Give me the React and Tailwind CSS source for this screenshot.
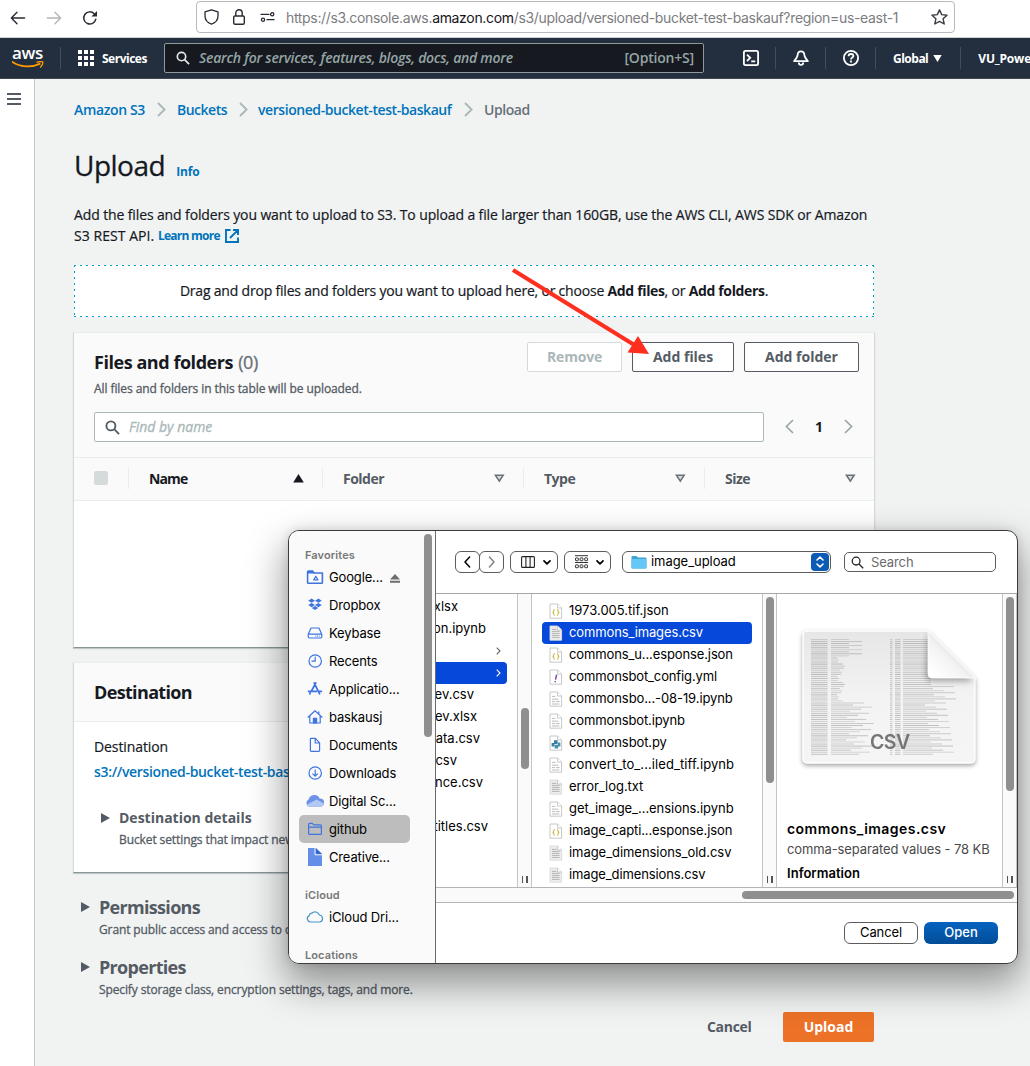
import React from "react";

function MagnifierIcon({ className, strokeWidth = 2 }) {
  return (
    <svg viewBox="0 0 16 16" fill="none" stroke="currentColor" strokeWidth={strokeWidth} className={className}>
      <circle cx="6.3" cy="6.3" r="4.8" />
      <path d="M9.8 9.8L15 15" />
    </svg>
  );
}

function BrowserBar() {
  return (
    <div className="flex h-[38px] shrink-0 items-start border-b border-[#cfcfd2] bg-white font-['Inter',sans-serif] text-[#2b2a33]">
      <div className="flex h-[35px] w-[196px] shrink-0 items-center pl-[10px]">
        <svg width="16" height="14" viewBox="0 0 16 14" fill="none" stroke="#2b2a33" strokeWidth="1.4" strokeLinecap="round" strokeLinejoin="round">
          <path d="M7 1.2L1.4 7L7 12.8M1.6 7H14.6" />
        </svg>
        <svg className="ml-[20px]" width="16" height="14" viewBox="0 0 16 14" fill="none" stroke="#b5b5b8" strokeWidth="1.4" strokeLinecap="round" strokeLinejoin="round">
          <path d="M9 1.2L14.6 7L9 12.8M14.4 7H1.4" />
        </svg>
        <svg className="ml-[20px]" width="16" height="16" viewBox="0 0 16 16" fill="none">
          <path d="M13.8 9.2A6.1 6.1 0 1 1 12.2 3.7" stroke="#2b2a33" strokeWidth="1.5" strokeLinecap="round" />
          <path d="M15 1V6.6H9.4Z" fill="#2b2a33" />
        </svg>
      </div>
      <div className="mt-px flex h-8 w-[759px] shrink-0 items-center rounded-[4px] border border-[#b9b9be] pl-[7px]">
        <svg width="15" height="16" viewBox="0 0 15 16" fill="none" stroke="#2b2a33" strokeWidth="1.3" strokeLinejoin="round">
          <path d="M7.5 0.8L14 2.9V6.8C14 10.6 11.5 13.9 7.5 15.2C3.5 13.9 1 10.6 1 6.8V2.9Z" />
        </svg>
        <svg className="ml-[14px]" width="12" height="16" viewBox="0 0 12 16" fill="none" stroke="#2b2a33" strokeWidth="1.4">
          <rect x="0.7" y="7" width="10.6" height="8.2" rx="1.2" />
          <path d="M2.8 7V4A3.2 3.2 0 0 1 9.2 4V7" />
        </svg>
        <svg className="ml-[15px]" width="16" height="10" viewBox="0 0 16 10" fill="none" stroke="#2b2a33" strokeWidth="1.3" strokeLinecap="round">
          <path d="M1 2.3H9M7 7.7H14" />
          <circle cx="12.2" cy="2.3" r="1.6" />
          <circle cx="3" cy="7.7" r="1.6" />
        </svg>
        <div className="ml-[10px] w-[640px] pt-px text-[14px] tracking-[-0.33px] whitespace-nowrap text-[#7c7c80]">
          https://s3.console.aws.<span className="text-[#15141a]">amazon.com</span>/s3/upload/versioned-bucket-test-baskauf?region=us-east-1
        </div>
        <svg className="ml-[5px] shrink-0" width="17" height="16" viewBox="0 0 17 16" fill="none" stroke="#3b3a43" strokeWidth="1.4" strokeLinejoin="round">
          <path d="M8.5 0.9L10.7 5.6L16 6.2L12.1 9.8L13.2 15L8.5 12.4L3.8 15L4.9 9.8L1 6.2L6.3 5.6Z" />
        </svg>
      </div>
    </div>
  );
}

function NavRule() {
  return <div className="h-[22px] w-px shrink-0 bg-[#414d5c]" />;
}

function AwsBar() {
  return (
    <div className="flex h-[41px] shrink-0 items-center overflow-hidden border-b border-[#414750] bg-[#232f3e] text-[12px] font-bold whitespace-nowrap text-white">
      <div className="flex w-[60px] shrink-0 flex-col pl-[12px]">
        <div className="h-[15px] text-[17px] leading-[12px] font-semibold tracking-[-0.3px]">aws</div>
        <svg width="32" height="8" viewBox="0 0 32 8" fill="none" className="-mt-px">
          <path d="M0.5 1C8 6.2 19 6.8 27.6 2.8" stroke="#f90" strokeWidth="1.9" strokeLinecap="round" />
          <path d="M25 1.2C27.5 0.4 30.6 0.4 30.8 1C31 2 30 4.6 28.6 6" stroke="#f90" strokeWidth="1.3" strokeLinecap="round" />
        </svg>
      </div>
      <NavRule />
      <svg className="ml-[17px] shrink-0" width="16" height="16" viewBox="0 0 16 16" fill="white">
        {[0, 6, 12].map((y) => [0, 6, 12].map((x) => <rect key={`${x}-${y}`} x={x} y={y} width="4" height="4" />))}
      </svg>
      <div className="ml-[8px] w-[62px] shrink-0 pt-[2px] tracking-[-0.5px]">Services</div>
      <div className="flex h-[30px] w-[540px] shrink-0 items-center rounded-[2px] border border-[#8d9a9b] bg-[#16191f] pr-[9px] pl-[11px] text-[14px] font-semibold text-[#95a5a6]">
        <MagnifierIcon className="h-[14px] w-[14px] text-[#e3e8e8]" strokeWidth={1.9} />
        <div className="ml-[9px] grow pb-px tracking-[-0.25px] italic">Search for services, features, blogs, docs, and more</div>
        <div className="pb-px tracking-[-0.2px]">[Option+S]</div>
      </div>
      <svg className="ml-[39px] shrink-0" width="16" height="16" viewBox="0 0 16 16" fill="none" stroke="white" strokeWidth="1.8">
        <rect x="0.9" y="0.9" width="14.2" height="14.2" rx="1.6" />
        <path d="M4 4.6L7.2 7.8L4 11M8.2 11.4H12.2" />
      </svg>
      <div className="ml-[16px]"><NavRule /></div>
      <svg className="ml-[17px] shrink-0" width="16" height="16" viewBox="0 0 16 16" fill="none" stroke="white" strokeWidth="1.8" strokeLinejoin="round">
        <path d="M8 1.4C5.6 1.4 4.8 3 4.6 5C4.4 7.4 3.4 8.6 1.2 11.2H14.8C12.6 8.6 11.6 7.4 11.4 5C11.2 3 10.4 1.4 8 1.4Z" />
        <path d="M5.8 12.4C5.8 13.9 6.7 14.8 8 14.8S10.2 13.9 10.2 12.4" />
      </svg>
      <div className="ml-[16px]"><NavRule /></div>
      <svg className="ml-[17px] shrink-0" width="16" height="16" viewBox="0 0 16 16" fill="none" stroke="white" strokeWidth="1.8">
        <circle cx="8" cy="8" r="7.1" />
        <path d="M5.6 6.2C5.6 4.8 6.6 4 8 4S10.4 4.8 10.4 6.1C10.4 7.6 8 7.6 8 9.5M8 10.6V12.4" />
      </svg>
      <div className="ml-[16px]"><NavRule /></div>
      <div className="ml-[17px] w-[36px] pt-[2px] tracking-[-0.5px]">Global</div>
      <svg className="ml-[5px] shrink-0" width="9" height="7" viewBox="0 0 9 7" fill="white"><path d="M0.3 0H8.7L4.5 7Z" /></svg>
      <div className="ml-[18px]"><NavRule /></div>
      <div className="ml-[17px] pt-[2px] tracking-[-0.2px]">VU_PowerUser</div>
    </div>
  );
}

function CrumbArrow() {
  return (
    <svg width="9" height="15" viewBox="0 0 9 15" fill="none" stroke="#aab7b8" strokeWidth="1.8"><path d="M1 1L7.6 7.5L1 14" /></svg>
  );
}

function Breadcrumb() {
  return (
    <div className="mt-[19px] flex h-[22px] items-center text-[14px] font-semibold whitespace-nowrap text-[#0073bb]">
      <div className="w-[83px] tracking-[-0.36px]">Amazon S3</div>
      <CrumbArrow />
      <div className="ml-[11px] w-[62px] tracking-[-0.5px]">Buckets</div>
      <CrumbArrow />
      <div className="ml-[10px] w-[206px] tracking-[-0.43px]">versioned-bucket-test-baskauf</div>
      <CrumbArrow />
      <div className="ml-[11px] font-semibold tracking-[-0.45px] text-[#687078]">Upload</div>
    </div>
  );
}

function DropZone() {
  return (
    <div className="mt-[19px] flex h-[52px] w-[800px] items-center justify-center bg-white bg-[repeating-linear-gradient(90deg,#00a1c9_0_2px,transparent_2px_6px),repeating-linear-gradient(90deg,#00a1c9_0_2px,transparent_2px_6px),repeating-linear-gradient(180deg,#00a1c9_0_2px,transparent_2px_6px),repeating-linear-gradient(180deg,#00a1c9_0_2px,transparent_2px_6px)] bg-[size:100%_1px,100%_1px,1px_100%,1px_100%] bg-[position:0_0,0_100%,0_0,100%_0] bg-no-repeat pb-[2px] text-[14px] tracking-[-0.2px] whitespace-nowrap [-webkit-text-stroke:0.2px]">
      <div>
        Drag and drop files and folders you want to upload here, or choose{" "}
        <b className="tracking-[-0.35px] [-webkit-text-stroke:0px]">Add files</b>, or <b className="tracking-[-0.35px] [-webkit-text-stroke:0px]">Add folders</b>.
      </div>
    </div>
  );
}

function SortIcon({ asc }) {
  return asc ? (
    <svg width="11" height="9" viewBox="0 0 11 9" fill="#16191f"><path d="M5.5 0L10.8 8.6H0.2Z" /></svg>
  ) : (
    <svg width="11" height="9" viewBox="0 0 11 9" fill="#d9dcdd" stroke="#687078" strokeWidth="1.5"><path d="M1.4 1.2H9.2L5.3 7.2Z" /></svg>
  );
}

const card = "w-[802px] -ml-px border border-[#d5dbdb] border-t-[#eaeded] border-b-[#879596] bg-white shadow-[0_1px_1px_rgba(0,28,36,0.2)]";

function FilesCard() {
  return (
    <div className={"mt-[15px] flex h-[316px] flex-col " + card}>
      <div className="flex h-[125px] shrink-0 flex-col border-b border-[#eaeded] bg-[#fafafa] pl-[20px]">
        <div className="flex h-[50px]">
          <div className="mt-[16px] grow text-[18px] leading-[26px] font-bold tracking-[-0.45px]">
            Files and folders <span className="ml-px font-normal text-[#687078] [-webkit-text-stroke:0.3px]">(0)</span>
          </div>
          <div className="mt-[9px] flex h-[30px] gap-[10px] text-[14px] font-bold text-[#545b64]">
            <div className="flex w-[95px] items-center justify-center rounded-[2px] border border-[#d5dbdb] bg-white pb-[2px] tracking-[-0.2px] text-[#aab7b8]">Remove</div>
            <div className="flex w-[102px] items-center justify-center rounded-[2px] border border-[#545b64] bg-white pb-[2px]">Add files</div>
            <div className="mr-[15px] flex w-[115px] items-center justify-center rounded-[2px] border border-[#545b64] bg-white pb-[2px]">Add folder</div>
          </div>
        </div>
        <div className="h-[29px] text-[12px] leading-[12px] tracking-[-0.08px] text-[#545b64] [-webkit-text-stroke:0.3px]">All files and folders in this table will be uploaded.</div>
        <div className="flex h-[30px] items-center">
          <div className="flex h-[30px] w-[670px] items-center rounded-[2px] border border-[#aab7b8] bg-white pl-[10px]">
            <MagnifierIcon className="h-[15px] w-[15px] text-[#545b64]" strokeWidth={2} />
            <div className="ml-[9px] pb-[2px] text-[14px] tracking-[0px] text-[#aab7b8] italic [-webkit-text-stroke:0.3px]">Find by name</div>
          </div>
          <svg className="mb-px ml-[21px]" width="9" height="15" viewBox="0 0 9 15" fill="none" stroke="#95a5a6" strokeWidth="1.6"><path d="M8 1L1.4 7.5L8 14" /></svg>
          <div className="w-[50px] pb-[2px] text-center text-[14px] font-bold">1</div>
          <svg className="mb-px" width="9" height="15" viewBox="0 0 9 15" fill="none" stroke="#95a5a6" strokeWidth="1.6"><path d="M1 1L7.6 7.5L1 14" /></svg>
        </div>
      </div>
      <div className="flex h-[43px] shrink-0 items-center border-b border-[#eaeded] bg-[#fafafa] pb-[2px] pl-[20px] text-[14px] font-bold text-[#545b64]">
        <div className="h-[14px] w-[14px] rounded-[2px] bg-[#d5dbdb]" />
        <div className="ml-[20px] h-[21px] w-px bg-[#eaeded]" />
        <div className="ml-[20px] w-[144px] tracking-[-0.9px] text-[#16191f]">Name</div>
        <SortIcon asc />
        <div className="ml-[18px] h-[21px] w-px bg-[#eaeded]" />
        <div className="ml-[20px] w-[151px] tracking-[-0.5px]">Folder</div>
        <SortIcon />
        <div className="ml-[18px] h-[21px] w-px bg-[#eaeded]" />
        <div className="ml-[20px] w-[131px] tracking-[-0.5px]">Type</div>
        <SortIcon />
        <div className="ml-[18px] h-[21px] w-px bg-[#eaeded]" />
        <div className="ml-[20px] w-[120px] tracking-[-0.5px]">Size</div>
        <SortIcon />
      </div>
    </div>
  );
}

function RightTriangle({ className }) {
  return (
    <svg className={className} width="9" height="10" viewBox="0 0 9 10" fill="#545b64"><path d="M0 0L9 5L0 10Z" /></svg>
  );
}

function DestinationCard() {
  return (
    <div className={"mt-[14px] h-[211px] " + card}>
      <div className="flex h-[59px] items-center border-b border-[#eaeded] bg-[#fafafa] pl-[20px] text-[18px] font-bold tracking-[-0.65px]">Destination</div>
      <div className="pl-[20px] text-[14px]">
        <div className="mt-[15px] leading-[20px] tracking-[-0.1px] [-webkit-text-stroke:0.2px]">Destination</div>
        <div className="mt-[5px] leading-[20px] font-semibold tracking-[-0.33px] text-[#0073bb]">s3://versioned-bucket-test-baskauf</div>
        <div className="mt-[26px] flex items-center leading-[20px] font-bold text-[#545b64]">
          <RightTriangle className="ml-[7px]" />
          <div className="ml-[9px]">Destination details</div>
        </div>
        <div className="ml-[25px] text-[12px] leading-[24px] tracking-[-0.1px] text-[#545b64] [-webkit-text-stroke:0.3px]">Bucket settings that impact new objects stored in the specified destination.</div>
      </div>
    </div>
  );
}

function Expander({ title, text }) {
  return (
    <div className="h-[60px] text-[#545b64]">
      <div className="flex h-[26px] items-center text-[18px] font-bold tracking-[-0.69px]">
        <RightTriangle className="ml-[7px]" />
        <div className="ml-[9px]">{title}</div>
      </div>
      <div className="ml-[25px] text-[12px] leading-[20px] tracking-[-0.12px] [-webkit-text-stroke:0.3px]">{text}</div>
    </div>
  );
}

const side = { width: 18, height: 18, viewBox: "0 0 18 18", fill: "none", stroke: "#3f74e0", strokeWidth: 1.2, strokeLinejoin: "round", strokeLinecap: "round" };

const sideIcons = {
  google: (
    <svg {...side}>
      <path d="M1.6 4V14.4A0.8 0.8 0 0 0 2.4 15.2H15.6A0.8 0.8 0 0 0 16.4 14.4V5H8L6.6 3.2H2.4A0.8 0.8 0 0 0 1.6 4Z" strokeWidth="1.6" />
      <path d="M1.6 5H8L6.6 3H1.8Z" fill="#3f74e0" />
      <path d="M9.8 8.2L12 12H7.6Z" fill="#3f74e0" />
      <circle cx="9.8" cy="10.7" r="0.8" fill="white" stroke="none" />
    </svg>
  ),
  dropbox: (
    <svg {...side} fill="#3f74e0" stroke="none">
      <path d="M5.6 2.6L9 4.7L5.6 6.8L2.2 4.7ZM12.4 2.6L15.8 4.7L12.4 6.8L9 4.7ZM5.6 7L9 9.1L5.6 11.2L2.2 9.1ZM12.4 7L15.8 9.1L12.4 11.2L9 9.1ZM9 10L12.2 12L9 14L5.8 12Z" />
    </svg>
  ),
  drive: (
    <svg {...side}>
      <path d="M5 4H13L15.8 10.4V12.6A1.4 1.4 0 0 1 14.4 14H3.6A1.4 1.4 0 0 1 2.2 12.6V10.4ZM2.4 10.2H15.6" />
      <path d="M9.5 12.1H13.6" strokeDasharray="0.8 0.9" strokeLinecap="butt" />
    </svg>
  ),
  clock: (
    <svg {...side}>
      <circle cx="9.2" cy="9" r="6.2" />
      <path d="M9.2 5V9.2H6" />
    </svg>
  ),
  apps: (
    <svg {...side} strokeWidth="1.7">
      <path d="M8.2 3L13.6 13.8M9.8 3L5.2 11.4M2.6 11.4H10.4M12.6 11.4H15.4M3.8 13.8L4.2 13" />
    </svg>
  ),
  home: (
    <svg {...side}>
      <path d="M2 9.2L9 2.8L16 9.2M3.8 8V15H14.2V8M12.8 3.8V6" />
      <path d="M7.4 15V10.4H10.6V15Z" fill="#3f74e0" />
    </svg>
  ),
  doc: (
    <svg {...side}>
      <path d="M4.4 3.2A0.8 0.8 0 0 1 5.2 2.4H9.4L13.6 6.8V14.6A0.8 0.8 0 0 1 12.8 15.4H5.2A0.8 0.8 0 0 1 4.4 14.6ZM9.2 2.6V7H13.4" />
    </svg>
  ),
  down: (
    <svg {...side}>
      <circle cx="9.2" cy="9" r="6.2" />
      <path d="M9.2 5.8V12M6.8 9.8L9.2 12.2L11.6 9.8" />
    </svg>
  ),
  cloudFill: (
    <svg {...side} stroke="none">
      <path d="M4 14.8A3.8 3.8 0 0 1 2.6 7.6A5.8 5.8 0 0 1 13.6 6.4A4.2 4.2 0 0 1 14.4 14.8Z" fill="#6e93e6" />
      <path d="M0.8 12.8L10.6 7.6L17.8 11.4A3.6 3.6 0 0 1 14.4 14.8H4A3.6 3.6 0 0 1 0.8 12.8Z" fill="#b4c8f4" />
    </svg>
  ),
  folder: (
    <svg {...side}>
      <path d="M2.6 4.4A1 1 0 0 1 3.6 3.4H6.4L7.8 4.8H14.4A1 1 0 0 1 15.4 5.8V13.4A1 1 0 0 1 14.4 14.4H3.6A1 1 0 0 1 2.6 13.4ZM2.6 7.2H15.4" />
    </svg>
  ),
  docFill: (
    <svg {...side} stroke="none">
      <path d="M2 0H9.8L16 6V18H2Z" fill="#648fe8" />
      <path d="M9.8 0V6H16Z" fill="#3565d0" />
      <path d="M9 0V6.8H16" stroke="white" strokeWidth="0.9" />
    </svg>
  ),
  cloud: (
    <svg {...side} stroke="#4795c4">
      <path d="M4.2 14A3.4 3.4 0 0 1 3.2 7.6A2.9 2.9 0 0 1 5.8 5.2A4.6 4.6 0 0 1 13.4 7A3.6 3.6 0 0 1 14 14Z" />
    </svg>
  ),
};

const favorites = [
  ["google", "Google..."],
  ["dropbox", "Dropbox"],
  ["drive", "Keybase"],
  ["clock", "Recents"],
  ["apps", "Applicatio..."],
  ["home", "baskausj"],
  ["doc", "Documents"],
  ["down", "Downloads"],
  ["cloudFill", "Digital Sc..."],
  ["folder", "github"],
  ["docFill", "Creative..."],
];

function SideItem({ icon, label, selected }) {
  return (
    <div className={"ml-[10px] flex h-[28px] w-[111px] shrink-0 items-center rounded-[5px] pl-[7px] " + (selected ? "bg-[#bdbdbd]" : "")}>
      {sideIcons[icon]}
      <div className="ml-[5px] pt-[2px] tracking-[-0.15px]">{label}</div>
      {icon === "google" && (
        <svg className="mt-[3px] ml-[7px]" width="10" height="9" viewBox="0 0 10 9" fill="#6e6e6e"><path d="M5 0L10 5.6H0ZM0 6.8H10V8.8H0Z" /></svg>
      )}
    </div>
  );
}

function SideHeading({ children, className }) {
  return <div className={"h-[16px] shrink-0 pl-[16px] text-[11px] leading-[16px] font-semibold tracking-[0.1px] text-[#777] " + className}>{children}</div>;
}

function Sidebar() {
  return (
    <div className="flex w-[147px] shrink-0 border-r border-[#6b6b6b] bg-[#fafafa]">
      <div className="flex w-[135px] shrink-0 flex-col overflow-hidden text-[13px] whitespace-nowrap text-black">
        <SideHeading className="mt-[16px]">Favorites</SideHeading>
        {favorites.map(([icon, label]) => (
          <SideItem key={label} icon={icon} label={label} selected={label === "github"} />
        ))}
        <SideHeading className="mt-[16px]">iCloud</SideHeading>
        <SideItem icon="cloud" label="iCloud Dri..." />
        <SideHeading className="mt-[16px]">Locations</SideHeading>
      </div>
      <div className="mt-[3px] h-[203px] w-[8px] rounded-full bg-[#8f8f8f]" />
    </div>
  );
}

function Chevron({ className = "" }) {
  return (
    <svg className={className} width="8" height="5" viewBox="0 0 8 5" fill="none" stroke="black" strokeWidth="1.7" strokeLinecap="round" strokeLinejoin="round"><path d="M1 0.9L4 3.9L7 0.9" /></svg>
  );
}

function Toolbar() {
  return (
    <div className="flex h-[63px] shrink-0 border-b border-[#a8a8a8] pt-[20px] pl-[19px]">
      <div className="flex h-[22px]">
        <div className="flex w-[25px] items-center justify-center rounded-[6px] border border-[#5c5c5c]">
          <svg width="7" height="12" viewBox="0 0 7 12" fill="none" stroke="black" strokeWidth="1.5" strokeLinecap="round" strokeLinejoin="round"><path d="M5.6 1L1 6L5.6 11" /></svg>
        </div>
        <div className="-ml-px flex w-[25px] items-center justify-center rounded-[6px] border border-[#5c5c5c]">
          <svg width="7" height="12" viewBox="0 0 7 12" fill="none" stroke="#808080" strokeWidth="1.4" strokeLinecap="round" strokeLinejoin="round"><path d="M1.4 1L6 6L1.4 11" /></svg>
        </div>
      </div>
      <div className="ml-[6px] flex h-[22px] w-[48px] items-center rounded-[6px] border border-[#5c5c5c] pl-[10px]">
        <svg width="14" height="12" viewBox="0 0 14 12" fill="none" stroke="#222" strokeWidth="1.1"><rect x="0.6" y="0.6" width="12.8" height="10.8" rx="1" /><path d="M4.9 0.6V11.4M9.1 0.6V11.4" /></svg>
        <Chevron className="ml-[8px]" />
      </div>
      <div className="ml-[6px] flex h-[22px] w-[47px] items-center rounded-[6px] border border-[#5c5c5c] pl-[10px]">
        <svg width="13" height="14" viewBox="0 0 13 14" fill="none" stroke="#333" strokeWidth="1">
          <path d="M0 0.7H13M0 7.5H13" />
          {[2.9, 9.9].map((y) => [0.5, 5.1, 9.7].map((x) => <rect key={`${x}-${y}`} x={x} y={y} width="2.8" height="2.8" rx="0.5" />))}
        </svg>
        <Chevron className="ml-[8px]" />
      </div>
      <div className="ml-[11px] flex h-[22px] w-[209px] items-center rounded-[6px] border border-[#5c5c5c] pr-[1px] pl-[8px] text-[13px] text-black">
        <svg width="16" height="14" viewBox="0 0 16 14">
          <path d="M0.5 2A1 1 0 0 1 1.5 1H5.4L7 2.4H14.5A1 1 0 0 1 15.5 3.4V12.6A1 1 0 0 1 14.5 13.6H1.5A1 1 0 0 1 0.5 12.6Z" fill="#3fa3d3" />
          <rect x="0.5" y="4" width="15" height="9.6" rx="0.8" fill="#64c7f5" />
        </svg>
        <div className="ml-[4px] grow tracking-[-0.05px]">image_upload</div>
        <div className="flex h-[18px] w-[18px] items-center justify-center rounded-[4px] bg-[#0c5cb4]">
          <svg width="8" height="12" viewBox="0 0 8 12" fill="none" stroke="white" strokeWidth="1.6" strokeLinecap="round" strokeLinejoin="round"><path d="M1 4L4 1.2L7 4M1 8L4 10.8L7 8" /></svg>
        </div>
      </div>
      <div className="mt-px ml-[13px] flex h-[20px] w-[152px] items-center self-start rounded-[5px] border border-[#5c5c5c] pl-[6px] text-[13px] text-[#6b6b6b]">
        <MagnifierIcon className="h-[13px] w-[13px] text-[#222]" strokeWidth={1.6} />
        <div className="ml-[7px] pt-px tracking-[-0.1px]">Search</div>
      </div>
    </div>
  );
}

function ColumnScroll({ children }) {
  return (
    <div className="flex w-[15px] shrink-0 flex-col items-center border-x border-[#c4c4c4] bg-[#fafafa]">
      <div className="flex grow flex-col items-center pt-[3px]">{children}</div>
      <div className="mb-[4px] flex gap-[3px]">
        <div className="h-[7px] w-[1.5px] bg-[#555]" />
        <div className="h-[7px] w-[1.5px] bg-[#555]" />
      </div>
    </div>
  );
}

const leftRows = [
  ["xlsx", "w-[22px]"],
  ["on.ipynb", "w-[50px]"],
  ["folder", ""],
  ["selected", ""],
  ["rev.csv", "w-[38px]"],
  ["rev.xlsx", "w-[41px]"],
  ["data.csv", "w-[44px]"],
  ["csv", "w-[21px]"],
  ["ence.csv", "w-[47px]"],
  ["", ""],
  ["titles.csv", "w-[52px]"],
];

function RowArrow() {
  return (
    <svg width="5" height="8" viewBox="0 0 5 8" fill="none" stroke="currentColor" strokeWidth="1.1"><path d="M0.7 0.7L4 4L0.7 7.3" /></svg>
  );
}

function LeftColumn() {
  return (
    <div className="flex w-[81px] shrink-0 flex-col pt-[2px]">
      {leftRows.map(([name, width], i) => {
        if (name === "folder" || name === "selected") {
          return (
            <div key={i} className={"flex h-[22px] w-[71px] shrink-0 items-center justify-end rounded-r-[4px] pr-[6px] " + (name === "selected" ? "bg-[#0648d9] text-white" : "text-[#666]")}>
              <RowArrow />
            </div>
          );
        }
        return (
          <div key={i} className={"flex h-[22px] shrink-0 items-center justify-end overflow-hidden whitespace-nowrap " + width}>
            <span>{name}</span>
          </div>
        );
      })}
    </div>
  );
}

function FileIcon({ kind }) {
  const gray = kind === "data";
  return (
    <svg width="14" height="16" viewBox="0 0 14 16" fill="none">
      <path d="M1 1H8.6L12.6 5V15.2H1Z" fill={gray ? "#ededed" : "#fff"} stroke={gray ? "#dadada" : "#c2c2c2"} strokeWidth="0.9" />
      <path d="M8.6 1V5H12.6" fill="#fff" stroke="#bbb" strokeWidth="0.8" />
      {gray && <path d="M3 4.4H7.4M3 6.4H10.6M3 8.4H10.6M3 10.4H10.6M3 12.4H10.6" stroke="#b4b4b4" strokeWidth="1" />}
      {kind === "note" && <path d="M3 5.4H6.4M3 8.2H9.4M3 10.6H6M7 10.6H10.6M3 13H10.4" stroke="#b4b4b4" strokeWidth="0.9" />}
      {kind === "json" && <path d="M5.6 6.2C4.4 6.2 5.2 8.6 4 9.4C5.2 10.2 4.4 12.6 5.6 12.6M8.2 6.2C9.4 6.2 8.6 8.6 9.8 9.4C8.6 10.2 9.4 12.6 8.2 12.6" stroke="#c3b942" strokeWidth="1.1" />}
      {kind === "yml" && <path d="M7.6 5.6L6.5 10.6M6.2 12V13.2" stroke="#8a3fb0" strokeWidth="1.5" />}
      {kind === "py" && (
        <>
          <path d="M5 5.2H8.6V9H5.4V11.4H2.6V8H5Z" fill="#3a7ca8" />
          <path d="M5.6 13.4H9.2V11.4H11.4V7.6H8.9V9.8H5.6Z" fill="#4591a8" />
        </>
      )}
    </svg>
  );
}

const files = [
  ["json", "1973.005.tif.json", "tracking-[0px]"],
  ["data", "commons_images.csv", "tracking-[-0.13px]"],
  ["json", "commons_u...esponse.json", "tracking-[-0.12px]"],
  ["yml", "commonsbot_config.yml", "tracking-[-0.13px]"],
  ["note", "commonsbo...-08-19.ipynb", "tracking-[-0.1px]"],
  ["note", "commonsbot.ipynb", "tracking-[-0.13px]"],
  ["py", "commonsbot.py", "tracking-[-0.1px]"],
  ["note", "convert_to_...iled_tiff.ipynb", "tracking-[0.08px]"],
  ["data", "error_log.txt", "tracking-[-0.05px]"],
  ["note", "get_image_...ensions.ipynb", "tracking-[-0.05px]"],
  ["json", "image_capti...esponse.json", "tracking-[-0.12px]"],
  ["data", "image_dimensions_old.csv", "tracking-[-0.05px]"],
  ["data", "image_dimensions.csv", "tracking-[-0.12px]"],
];

function FilesColumn() {
  return (
    <div className="flex w-[230px] shrink-0 flex-col pt-[6px] pl-[10px]">
      {files.map(([kind, name, tracking], i) => (
        <div key={name} className={"flex h-[22px] w-[210px] shrink-0 items-center rounded-[4px] pl-[7px] whitespace-nowrap " + (i === 1 ? "bg-[#0648d9] text-white" : "")}>
          <FileIcon kind={kind} />
          <div className={"ml-[6px] " + tracking}>{name}</div>
        </div>
      ))}
    </div>
  );
}

function CsvPreview() {
  const rows = Array.from({ length: 57 }, (_, i) => i);
  return (
    <svg width="186" height="148" viewBox="0 0 186 148" className="drop-shadow-[0_2px_2px_rgba(0,0,0,0.35)]">
      <defs>
        <linearGradient id="sheet" x1="0" y1="0" x2="0" y2="1"><stop offset="0" stopColor="#e6e6e6" /><stop offset="0.5" stopColor="#f3f3f3" /><stop offset="1" stopColor="#f5f5f5" /></linearGradient>
        <linearGradient id="fold" x1="0.1" y1="0.9" x2="0.6" y2="0.4"><stop offset="0" stopColor="#fff" /><stop offset="0.6" stopColor="#f4f4f4" /><stop offset="1" stopColor="#e2e2e2" /></linearGradient>
        <clipPath id="sheetClip"><path d="M10 6H131L178 53V134A4 4 0 0 1 174 138H10A4 4 0 0 1 6 134V10A4 4 0 0 1 10 6Z" /></clipPath>
        <filter id="soft" x="-20%" y="-20%" width="140%" height="140%"><feGaussianBlur stdDeviation="3" /></filter>
      </defs>
      <path d="M10 6H131L178 53V134A4 4 0 0 1 174 138H10A4 4 0 0 1 6 134V10A4 4 0 0 1 10 6Z" fill="url(#sheet)" stroke="#fff" strokeWidth="1.4" />
      <g clipPath="url(#sheetClip)">
        <g fill="#858585" opacity="0.55">
          {rows.map((i) => {
            const y = 14 + i * 2.05;
            const a = i < 9 ? 18 + ((i * 13) % 26) : 6 + ((i * 17 + i * i * 3) % 9);
            const b = i > 30 ? 14 + ((i * 19) % 30) : a;
            return (
              <g key={i} opacity={0.55 + ((i * 7) % 5) / 11}>
                <rect x="14" y={y} width="16.5" height="1.1" />
                <rect x="34" y={y} width={b} height="0.9" />
                <rect x="93" y={y} width="2.4" height="1.1" />
                <rect x="98" y={y} width="5.5" height="1.1" />
                <rect x="106" y={y} width={22 + (i > 22 ? ((i * 11) % 32) : 6)} height="0.9" />
              </g>
            );
          })}
        </g>
        <path d="M131 8L176 56H135A6 6 0 0 1 129 51Z" fill="#000" opacity="0.35" filter="url(#soft)" />
      </g>
      <path d="M131 6L178 53H135A4 4 0 0 1 131 49Z" fill="url(#fold)" stroke="#fff" strokeWidth="0.8" />
      <text x="73" y="124" fontSize="19.5" fontWeight="600" fill="#757575" letterSpacing="-0.5" fontFamily="Inter, sans-serif">CSV</text>
    </svg>
  );
}

function PreviewColumn() {
  return (
    <div className="flex w-[225px] shrink-0 flex-col pl-[10px] whitespace-nowrap">
      <div className="mt-[31px] ml-[10px] h-[148px] w-[186px]"><CsvPreview /></div>
      <div className="mt-[46px] text-[14px] leading-[20px] font-semibold tracking-[0.45px]">commons_images.csv</div>
      <div className="leading-[20px] tracking-[-0.11px] text-[#4a4a4a]">comma-separated values - 78 KB</div>
      <div className="mt-[5px] leading-[18px] font-semibold tracking-[0.04px]">Information</div>
    </div>
  );
}

function FileDialog() {
  return (
    <div className="absolute top-[530px] left-[288px] flex h-[434px] w-[730px] overflow-hidden rounded-[11px] border border-[#3c3c3c] bg-white font-['Inter',sans-serif] text-[13px] text-black">
      <Sidebar />
      <div className="flex grow flex-col">
        <Toolbar />
        <div className="flex h-[293px] shrink-0 overflow-hidden text-[13px]">
          <LeftColumn />
          <ColumnScroll><div className="mt-[111px] h-[61px] w-[8px] rounded-full bg-[#8f8f8f]" /></ColumnScroll>
          <FilesColumn />
          <ColumnScroll><div className="h-[186px] w-[8px] rounded-full bg-[#8f8f8f]" /></ColumnScroll>
          <PreviewColumn />
          <ColumnScroll><div className="h-[194px] w-[8px] rounded-full bg-[#8f8f8f]" /></ColumnScroll>
        </div>
        <div className="flex h-[16px] shrink-0 items-center justify-end border-y border-[#b4b4b4] bg-[#fafafa] pr-[3px]">
          <div className="h-[8px] w-[272px] rounded-full bg-[#8f8f8f]" />
        </div>
        <div className="flex justify-end gap-[6px] pt-[19px] pr-[19px]">
          <div className="flex h-[22px] w-[74px] items-center justify-center rounded-[6px] border border-[#5c5c5c] tracking-[-0.1px]">Cancel</div>
          <div className="flex h-[22px] w-[74px] items-center justify-center rounded-[6px] bg-linear-to-b from-[#0663c0] to-[#024d98] font-medium text-white">Open</div>
        </div>
      </div>
    </div>
  );
}

export default function App() {
  return (
    <div className="relative flex h-[1066px] w-[1030px] flex-col overflow-hidden bg-[#f1f3f3] font-['Open_Sans','Noto_Sans',sans-serif] text-[#16191f]">
      <BrowserBar />
      <AwsBar />
      <div className="flex grow">
        <div className="w-[35px] shrink-0 border-r border-[#c3c9c9] bg-white pt-[14px] pl-[7px]">
          <svg width="14" height="12" viewBox="0 0 14 12" fill="#545b64"><path d="M0 0H14V2H0ZM0 5H14V7H0ZM0 10H14V12H0Z" /></svg>
        </div>
        <div className="flex w-[840px] flex-col pl-[39px]">
          <Breadcrumb />
          <div className="mt-[27px] flex h-[36px] items-baseline text-[28px] leading-[36px] tracking-[-0.5px] [-webkit-text-stroke:0.3px]">
            Upload<span className="ml-[11px] text-[12px] font-bold tracking-[-0.1px] text-[#0073bb] [-webkit-text-stroke:0px]">Info</span>
          </div>
          <div className="mt-[22px] h-[41px] text-[14px] leading-[20.5px] tracking-[-0.12px] whitespace-nowrap [-webkit-text-stroke:0.2px]">
            <div>Add the files and folders you want to upload to S3. To upload a file larger than 160GB, use the AWS CLI, AWS SDK or Amazon</div>
            <div className="flex items-center">
              <span className="w-[84px] tracking-[0.05px]">S3 REST API.</span>
              <span className="w-[67px] text-[12px] font-bold tracking-[-0.75px] text-[#0073bb] [-webkit-text-stroke:0px]">Learn more</span>
              <svg width="14" height="14" viewBox="0 0 14 14" fill="none" stroke="#0073bb" strokeWidth="1.9"><path d="M5.6 1H1V13H13V8.4M8 1H13V6M12.6 1.4L5 9" /></svg>
            </div>
          </div>
          <DropZone />
          <FilesCard />
          <DestinationCard />
          <div className="mt-[21px]">
            <Expander title="Permissions" text="Grant public access and access to other AWS accounts." />
            <Expander title="Properties" text="Specify storage class, encryption settings, tags, and more." />
          </div>
          <div className="-mt-[2px] flex h-[30px] w-[800px] items-center justify-end text-[14px] font-bold text-[#545b64]">
            <div className="w-[76px] pb-px tracking-[-0.3px]">Cancel</div>
            <div className="flex h-[30px] w-[91px] items-center justify-center rounded-[2px] bg-[#ec7227] pb-px text-white">Upload</div>
          </div>
        </div>
      </div>
      <div className="pointer-events-none absolute top-[530px] left-[288px] h-[434px] w-[730px] rounded-[11px] shadow-[0_18px_38px_3px_rgba(0,0,0,0.4),0_0_10px_rgba(0,0,0,0.12)]" />
      <FileDialog />
      <svg className="absolute top-[262px] left-[505px]" width="160" height="110" viewBox="0 0 160 110">
        <path d="M8 8L131 84" stroke="#ff2f1f" strokeWidth="4" />
        <path d="M144 92L122.5 90.5L133 74Z" fill="#ff2f1f" />
      </svg>
    </div>
  );
}
